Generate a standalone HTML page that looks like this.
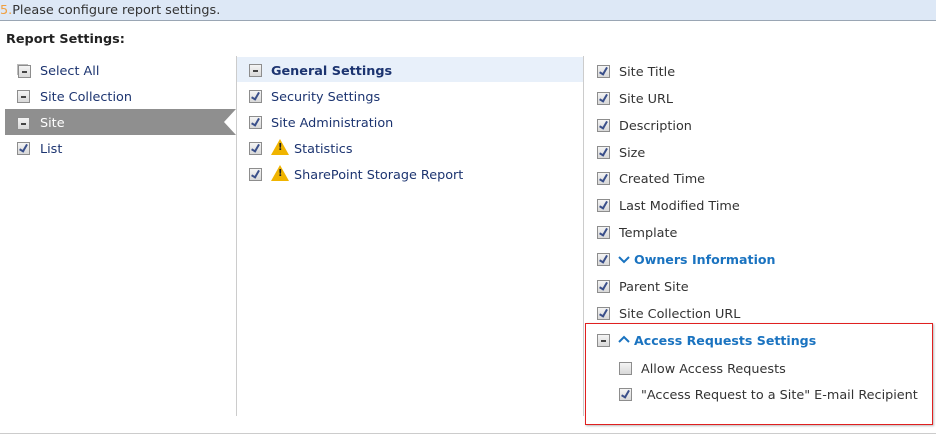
<!DOCTYPE html><html><head><style>
body{margin:0;width:936px;height:443px;background:#fff;font-family:"DejaVu Sans",Verdana,sans-serif;font-size:12.8px;position:relative;overflow:hidden}
.a{position:absolute}
.hd{left:0;top:0;width:936px;height:20px;background:#dde8f6;border-bottom:1px solid #9aa6b4;color:#333;line-height:21px}
.cb{position:absolute;width:11px;height:11px;border:1px solid #8d8d8d;background:linear-gradient(#f4f4f4,#d8d8d8)}
.cb.m::after{content:"";position:absolute;left:3px;top:5px;width:5px;height:1.5px;background:#444}
.cb.c::after{content:"";position:absolute;left:3px;top:0px;width:3px;height:7px;border:solid #3a4f8a;border-width:0 2px 2px 0;transform:rotate(30deg)}
.t{position:absolute;white-space:nowrap;margin-top:1px}
.n{color:#1c3470}.g{color:#333}
.w{position:absolute;width:0;height:0;border-left:9px solid transparent;border-right:9px solid transparent;border-bottom:16px solid #f0b400}
.w span{position:absolute;left:-2px;top:3px;font-size:10px;font-weight:bold;color:#222}
.bl{color:#1a73c0;font-weight:bold;font-size:12.6px}
</style></head><body>
<div class="a hd"><span style="color:#f0a040">5.</span>Please configure report settings.</div>
<div class="t" style="left:6px;top:31px;font-weight:bold;color:#222">Report Settings:</div>
<div class="a" style="left:236px;top:56px;width:1px;height:360px;background:#ccc"></div>
<div class="a" style="left:583px;top:56px;width:1px;height:360px;background:#ccc"></div>
<div class="a" style="left:0;top:433px;width:936px;height:1px;background:#ccc"></div>
<!-- left -->
<div class="cb m" style="left:18px;top:65px;box-shadow:-2px -2px 0 -1px #bbb"></div><div class="t n" style="left:40px;top:63px">Select All</div>
<div class="cb m" style="left:17px;top:90px"></div><div class="t n" style="left:40px;top:89px">Site Collection</div>
<svg class="a" style="left:5px;top:109px" width="232" height="26"><polygon points="0,0 231,0 219,13 231,26 0,26" fill="#8f8f8f"/></svg>
<div class="cb m" style="left:17px;top:117px"></div><div class="t" style="left:40px;top:115px;color:#fff">Site</div>
<div class="cb c" style="left:17px;top:142px"></div><div class="t n" style="left:40px;top:141px">List</div>
<!-- middle -->
<div class="a" style="left:237px;top:57px;width:346px;height:25px;background:#e8f0fa"></div>
<div class="cb m" style="left:249px;top:64px"></div><div class="t n" style="left:271px;top:63px;font-weight:bold">General Settings</div>
<div class="cb c" style="left:249px;top:90px"></div><div class="t n" style="left:271px;top:89px">Security Settings</div>
<div class="cb c" style="left:249px;top:116px"></div><div class="t n" style="left:271px;top:115px">Site Administration</div>
<div class="cb c" style="left:249px;top:142px"></div><div class="w" style="left:271px;top:139px"><span>!</span></div><div class="t n" style="left:294px;top:141px">Statistics</div>
<div class="cb c" style="left:249px;top:168px"></div><div class="w" style="left:271px;top:165px"><span>!</span></div><div class="t n" style="left:294px;top:167px">SharePoint Storage Report</div>
<!-- right -->
<div class="cb c" style="left:597px;top:65px"></div><div class="t g" style="left:619px;top:64px">Site Title</div>
<div class="cb c" style="left:597px;top:92px"></div><div class="t g" style="left:619px;top:91px">Site URL</div>
<div class="cb c" style="left:597px;top:119px"></div><div class="t g" style="left:619px;top:118px">Description</div>
<div class="cb c" style="left:597px;top:146px"></div><div class="t g" style="left:619px;top:145px">Size</div>
<div class="cb c" style="left:597px;top:172px"></div><div class="t g" style="left:619px;top:171px">Created Time</div>
<div class="cb c" style="left:597px;top:199px"></div><div class="t g" style="left:619px;top:198px">Last Modified Time</div>
<div class="cb c" style="left:597px;top:226px"></div><div class="t g" style="left:619px;top:225px">Template</div>
<div class="cb c" style="left:597px;top:253px"></div>
<svg class="a" style="left:618px;top:255px" width="12" height="9"><path d="M1,2 L6,7 L11,2" stroke="#1a73c0" stroke-width="2" fill="none"/></svg>
<div class="t bl" style="left:634px;top:251px">Owners Information</div>
<div class="cb c" style="left:597px;top:280px"></div><div class="t g" style="left:619px;top:279px">Parent Site</div>
<div class="cb c" style="left:597px;top:307px"></div><div class="t g" style="left:619px;top:306px">Site Collection URL</div>
<div class="a" style="left:585px;top:323px;width:346px;height:100px;border:1px solid #e02020;box-shadow:1px 1px 2px #bbb"></div>
<div class="cb m" style="left:597px;top:334px"></div>
<svg class="a" style="left:618px;top:335px" width="12" height="9"><path d="M1,7 L6,2 L11,7" stroke="#1a73c0" stroke-width="2" fill="none"/></svg>
<div class="t bl" style="left:634px;top:332px">Access Requests Settings</div>
<div class="cb" style="left:619px;top:362px"></div><div class="t g" style="left:641px;top:361px">Allow Access Requests</div>
<div class="cb c" style="left:619px;top:388px"></div><div class="t g" style="left:641px;top:387px">"Access Request to a Site" E-mail Recipient</div>
</body></html>
